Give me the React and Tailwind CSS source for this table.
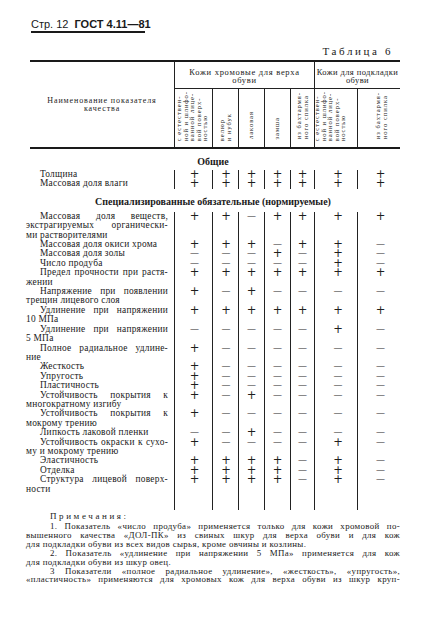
import React from "react";

const serif = { fontFamily: '"Liberation Serif", "Times New Roman", serif' };
const dejavu = { fontFamily: '"DejaVu Sans", sans-serif' };

const rows = [
  { lines: ["Массовая доля веществ,", "экстрагируемых органически-", "ми растворителями"], v: "++-++++" },
  { lines: ["Массовая доля окиси хрома"], v: "+++-++-" },
  { lines: ["Массовая доля золы"], v: "---+-+-" },
  { lines: ["Число продуба"], v: "-----+-" },
  { lines: ["Предел прочности при растя-", "жении"], v: "+++++++" },
  { lines: ["Напряжение при появлении", "трещин лицевого слоя"], v: "+-+----" },
  { lines: ["Удлинение при напряжении", "10 МПа"], v: "+++++++" },
  { lines: ["Удлинение при напряжении", "5 МПа"], v: "-----+-" },
  { lines: ["Полное радиальное удлине-", "ние"], v: "+------" },
  { lines: ["Жесткость"], v: "+------" },
  { lines: ["Упругость"], v: "+------" },
  { lines: ["Пластичность"], v: "+------" },
  { lines: ["Устойчивость покрытия к", "многократному изгибу"], v: "+-+----" },
  { lines: ["Устойчивость покрытия к", "мокрому трению"], v: "+------" },
  { lines: ["Липкость лаковой пленки"], v: "--+----" },
  { lines: ["Устойчивость окраски к сухо-", "му и мокрому трению"], v: "+----+-" },
  { lines: ["Эластичность"], v: "++++-+-" },
  { lines: ["Отделка"], v: "++++-+-" },
  { lines: ["Структура лицевой поверх-", "ности"], v: "++++-+-" },
];

const general = [
  { lines: ["Толщина"], v: "+++++++" },
  { lines: ["Массовая доля влаги"], v: "+++++++" },
];

const colW = ["w-[38px]", "w-[26px]", "w-[26px]", "w-[26px]", "w-[24px]", "w-[43px]", "w-[43px]"];
const colPad = ["pl-[2px]", "pl-[1px]", "", "", "", "pl-[4px]", "pl-[3px]"];

function Sym({ c }) {
  if (c === "+") {
    return (
      <span className="block text-[11.5px] leading-[9.4px] text-[#1e1e1e]" style={dejavu}>
        +
      </span>
    );
  }
  return <span className="block text-[8px] leading-[9.4px] text-[#1e1e1e] -translate-y-[1px]">—</span>;
}

function Row({ lines, v }) {
  return (
    <div className="flex">
      <div className="w-[148px] pr-[6px] text-[9.4px] leading-[9.4px] tracking-[0.25px]">
        {lines.map((l, i) => {
          const last = i === lines.length - 1;
          return (
            <div
              key={i}
              className={
                "whitespace-nowrap " +
                (i === 0 ? "pl-[14px] " : "") +
                (last ? "text-left" : "text-justify [text-align-last:justify]")
              }
            >
              {l}
            </div>
          );
        })}
      </div>
      {v.split("").map((c, i) => (
        <div key={i} className={colW[i] + " " + colPad[i] + " border-l border-[#222] flex justify-center"}>
          <div className="h-[9.4px] flex items-center justify-center">
            <Sym c={c} />
          </div>
        </div>
      ))}
    </div>
  );
}

function VText({ children }) {
  return (
    <div className="[writing-mode:vertical-rl] rotate-180 text-[6.5px] leading-[6.5px] tracking-[1px] whitespace-nowrap text-[#111]">
      {children}
    </div>
  );
}

const noteJ = "whitespace-nowrap text-justify [text-align-last:justify]";

export default function App() {
  return (
    <div className="w-[444px] h-[627px] bg-white overflow-hidden text-[#1a1a1a]" style={serif}>
      <div className="ml-[26px] w-[374px] flex flex-col">
        {/* Page header */}
        <div className="pt-[19px] pl-[5px]">
          <div
            className="text-[11px] leading-[11px] whitespace-nowrap"
            style={{ fontFamily: '"Liberation Sans", Arial, sans-serif' }}
          >
            Стр. 12 <span className="font-bold ml-[3px]">ГОСТ 4.11—81</span>
          </div>
          <div className="mt-[1px] h-[2px] w-[114px] bg-[#1a1a1a]" />
        </div>

        <div className="mt-[13px] h-[11px] text-right pr-[7px] text-[11px] leading-[11px] tracking-[2.6px]">
          Таблица 6
        </div>

        <div className="mt-[3px] ml-[4px] h-[2px] bg-[#1a1a1a]" />

        {/* Table header */}
        <div className="flex h-[85px]">
          <div className="w-[148px] flex items-center justify-center text-center text-[8px] leading-[8px] tracking-[0.9px] pl-[4px]">
            <div>
              Наименование показателя
              <br />
              качества
            </div>
          </div>
          <div className="w-[226px] flex flex-col">
            <div className="flex h-[27px] border-b border-[#222]">
              <div className="w-[140px] border-l border-[#222] flex items-center justify-center text-center text-[8.5px] leading-[8.5px] tracking-[0.7px] pt-[2px]">
                <div>
                  Кожи хромовые для верха
                  <br />
                  обуви
                </div>
              </div>
              <div className="w-[86px] border-l border-[#222] flex items-center justify-center text-center text-[8.5px] leading-[8.5px] tracking-[0.4px] whitespace-nowrap pt-[2px]">
                <div>
                  Кожи для подкладки
                  <br />
                  обуви
                </div>
              </div>
            </div>
            <div className="flex flex-1">
              <div className="w-[38px] border-l border-[#222] flex items-end justify-center pb-[6px] pr-[3px]">
                <VText>
                  с естествен-
                  <br />
                  ной и шлифо-
                  <br />
                  ванной лице-
                  <br />
                  вой поверх-
                  <br />
                  ностью
                </VText>
              </div>
              <div className="w-[26px] border-l border-[#222] flex items-end justify-center pb-[6px]">
                <VText>
                  велюр
                  <br />
                  и нубук
                </VText>
              </div>
              <div className="w-[26px] border-l border-[#222] flex items-end justify-center pb-[8px]">
                <VText>лаковая</VText>
              </div>
              <div className="w-[26px] border-l border-[#222] flex items-end justify-center pb-[8px]">
                <VText>замша</VText>
              </div>
              <div className="w-[24px] border-l border-[#222] flex items-end justify-center pb-[8px]">
                <VText>
                  из бахтармя-
                  <br />
                  ного спилка
                </VText>
              </div>
              <div className="w-[43px] border-l border-[#222] flex items-end justify-center pb-[6px] pr-[12px]">
                <VText>
                  с естествен-
                  <br />
                  ной и шлифо-
                  <br />
                  ванной лице-
                  <br />
                  вой поверх-
                  <br />
                  ностью
                </VText>
              </div>
              <div className="w-[43px] border-l border-[#222] flex items-end justify-center pb-[8px] pl-[4px]">
                <VText>
                  из бахтармя-
                  <br />
                  ного спилка
                </VText>
              </div>
            </div>
          </div>
        </div>

        <div className="ml-[4px] h-[2px] bg-[#1a1a1a]" />

        {/* Body */}
        <div className="pt-[8px] pb-[3px] text-center font-bold text-[10px] leading-[10px]">Общие</div>
        {general.map((r, i) => (
          <Row key={i} {...r} />
        ))}
        <div className="pt-[8px] pb-[5px] text-center font-bold text-[10px] leading-[10px] whitespace-nowrap">
          Специализированные обязательные (нормируемые)
        </div>
        {rows.map((r, i) => (
          <Row key={i} {...r} />
        ))}
        <div className="flex h-[16px]">
          <div className="w-[148px]" />
          {colW.map((w, i) => (
            <div key={i} className={w + " border-l border-[#222]"} />
          ))}
        </div>

        {/* Notes */}
        <div className="mt-[2px] pl-[24px] text-[9px] leading-[9px] tracking-[2.6px]">Примечания:</div>
        <div className="text-[8.9px] leading-[8.9px] tracking-[0.35px] mt-[1px]">
          <div className={"pl-[24px] " + noteJ}>
            1. Показатель «число продуба» применяется только для кожи хромовой по-
          </div>
          <div className={noteJ}>
            вышенного качества «ДОЛ-ПК» из свиных шкур для верха обуви и для кож
          </div>
          <div className="whitespace-nowrap">
            для подкладки обуви из всех видов сырья, кроме овчины и козлины.
          </div>
          <div className={"pl-[24px] " + noteJ}>
            2. Показатель «удлинение при напряжении 5 МПа» применяется для кож
          </div>
          <div className="whitespace-nowrap">для подкладки обуви из шкур овец.</div>
          <div className={"pl-[24px] " + noteJ}>
            3 Показатели «полное радиальное удлинение», «жесткость», «упругость»,
          </div>
          <div className={noteJ}>
            «пластичность» применяются для хромовых кож для верха обуви из шкур круп-
          </div>
        </div>
      </div>
    </div>
  );
}
